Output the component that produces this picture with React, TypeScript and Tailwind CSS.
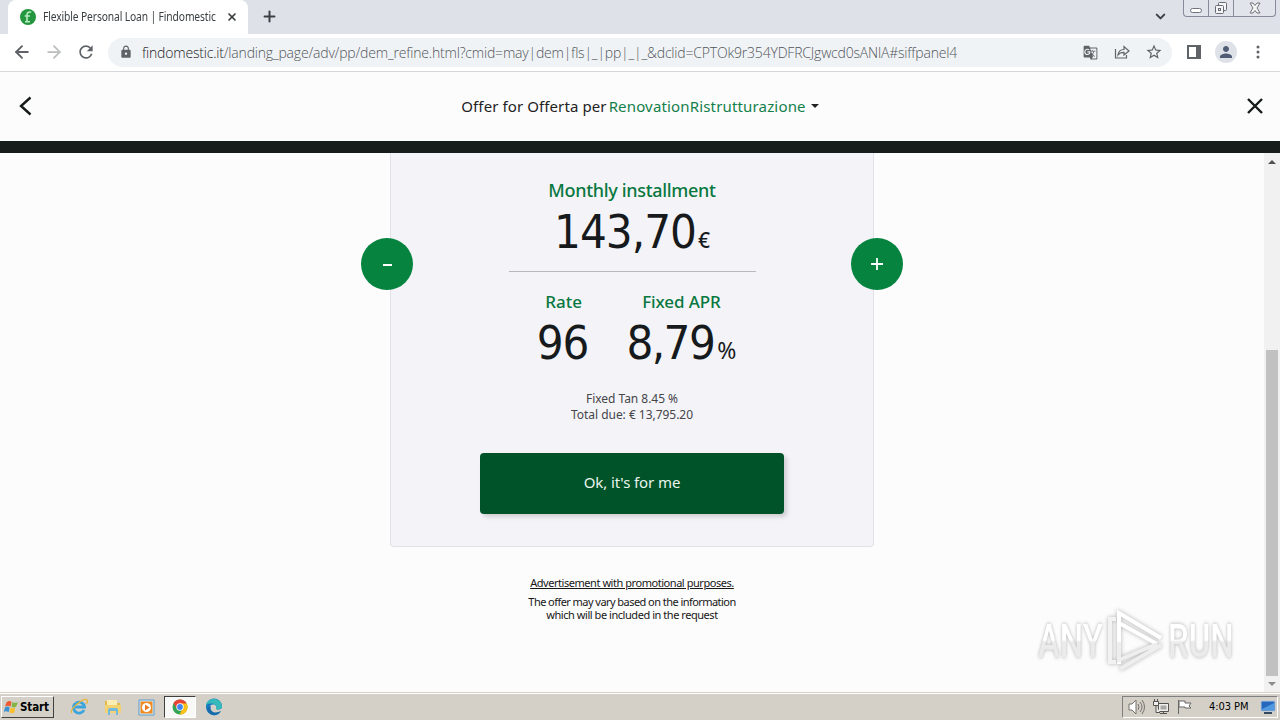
import { ArrowLeft, ArrowRight, ChevronDown, Plus, X } from 'lucide-react';
import { MdLock, MdRefresh, MdStarBorder, MdGTranslate, MdPerson } from 'react-icons/md';

function TabBar() {
  return (
    <div className="flex h-[34px] bg-[#dee1e8] pl-2 font-['Noto_Sans',sans-serif]">
      <div className="flex w-[240px] items-center rounded-t-lg bg-white pl-3 pr-[10px]">
        <svg className="h-4 w-4 shrink-0" viewBox="0 0 16 16">
          <circle cx="8" cy="8" r="8" fill="#23963f" />
          <path d="M11.2 3.3C8.5 2.6 7 3.6 7 5.8v6.4M4.7 7h5.2M5 12.7h5" fill="none" stroke="#b8edc0" strokeWidth="1.6" />
        </svg>
        <span className="ml-[7px] w-[173px]">
          <span className="block origin-left scale-x-[0.856] whitespace-nowrap text-[12px] leading-4 tracking-[-0.14px] text-[#3c4043]">
            Flexible Personal Loan | Findomestic
          </span>
        </span>
        <X className="ml-auto h-3 w-3 shrink-0 text-[#3c4043]" strokeWidth={3.4} />
      </div>
      <Plus className="ml-[13px] mt-[8px] h-[17px] w-[17px] text-[#3c4043]" strokeWidth={2.8} />
      <div className="ml-auto flex">
        <ChevronDown className="mr-[15px] mt-[9px] h-[15px] w-[15px] text-[#3c4043]" strokeWidth={3.2} />
        <div className="mr-1 flex h-[17px] w-[93px] rounded-b border border-t-0 border-[#858b99] bg-[#e1e4ea]">
          <div className="flex w-[25px] items-end justify-center border-r border-[#858b99] pb-[3px]">
            <div className="h-[5px] w-3 rounded-sm border border-[#70737a] bg-white" />
          </div>
          <div className="flex w-[25px] justify-center border-r border-[#858b99]">
            <svg className="mt-[1px] h-[14px] w-[14px]" viewBox="0 0 14 14" fill="#f4f4f6" stroke="#666b75">
              <rect x="4.5" y="1.5" width="8" height="8" rx="1" />
              <rect x="1.5" y="4.5" width="8" height="8" rx="1" />
              <rect x="4.5" y="7.5" width="2" height="2" />
            </svg>
          </div>
          <div className="flex flex-1 justify-center">
            <svg className="mt-[2px] h-3 w-3" viewBox="0 0 12 12" fill="#f7f7f8" stroke="#70737a">
              <path d="M1 1h3l2 2.5L8 1h3L8 6l3 5H8L6 8.5 4 11H1l3-5z" />
            </svg>
          </div>
        </div>
      </div>
    </div>
  );
}

function Toolbar() {
  return (
    <div className="flex h-[38px] items-center border-b border-[#d5d7da] bg-white pb-[1px] text-[#5f6368]">
      <ArrowLeft className="ml-3 h-5 w-5" strokeWidth={2.3} />
      <ArrowRight className="ml-3 h-5 w-5 text-[#babcbe]" strokeWidth={2.1} />
      <MdRefresh className="ml-[12px] h-5 w-5" />
      <div className="ml-[12px] flex h-[29px] w-[1064px] items-center rounded-full bg-[#f0f3f6] pl-[11px] pr-[9px]">
        <MdLock className="h-[14px] w-[14px]" />
        <span className="ml-[9px] whitespace-nowrap pt-[1px] font-['Open_Sans','Noto_Sans',sans-serif] text-[14px] font-light leading-5 tracking-[-0.19px] text-[#50555a]">
          <span className="text-[#202124]">findomestic.it</span>
          /landing_page/adv/pp/dem_refine.html?cmid=may|dem|fls|_|pp|_|_&amp;dclid=CPTOk9r354YDFRCJgwcd0sANlA#siffpanel4
        </span>
        <MdGTranslate className="ml-auto h-[15px] w-[15px]" />
        <svg className="ml-[16px] h-4 w-4" viewBox="0 0 16 16" fill="none" stroke="currentColor" strokeWidth="1.2">
          <path d="M1.500 5v9h11v-3M4 11c.5-4 2.500-5.500 6-5.500V2.500l5 4.500-5 4V8.300C7.300 8.200 5.500 9 4 11z" />
        </svg>
        <MdStarBorder className="ml-[15px] h-[18px] w-[18px]" />
      </div>
      <svg className="ml-[14px] h-4 w-4" viewBox="0 0 16 16">
        <path d="M2 2h12v12H2z" fill="none" stroke="currentColor" strokeWidth="2" />
        <path d="M10 2h4v12h-4z" fill="currentColor" />
      </svg>
      <div className="ml-[13px] flex h-[22px] w-[22px] items-center justify-center rounded-full bg-[#dee1e7]">
        <MdPerson className="h-[18px] w-[18px] text-[#505b75]" />
      </div>
      <svg className="ml-[13px] h-4 w-4" viewBox="0 0 16 16" fill="currentColor">
        <circle cx="8" cy="3" r="1.500" />
        <circle cx="8" cy="8" r="1.500" />
        <circle cx="8" cy="13" r="1.500" />
      </svg>
    </div>
  );
}

function OfferHeader() {
  return (
    <header className="flex h-[81px] items-center justify-between border-b-[12px] border-[#171d1b] bg-[#fcfcfc] px-4 pb-[1px]">
      <svg className="h-5 w-5" viewBox="0 0 20 20" fill="none" stroke="#161a19" strokeWidth="2.400">
        <path d="M14.500 1.500 5 10l9.500 8.500" />
      </svg>
      <div className="flex items-center whitespace-nowrap pr-[2px] text-[15px] leading-5 tracking-[0.1px] text-[#222]">
        <span>Offer for Offerta per</span>
        <span className="ml-[2px] tracking-[0.16px] text-[#13804b]">RenovationRistrutturazione</span>
        <span className="ml-[5px] border-x-4 border-t-4 border-x-transparent border-t-[#222]" />
      </div>
      <svg className="h-[18px] w-[18px]" viewBox="0 0 18 18" fill="none" stroke="#161a19" strokeWidth="2.400">
        <path d="m2 2 14 14M16 2 2 16" />
      </svg>
    </header>
  );
}

const figure = "font-['DejaVu_Sans_Condensed','DejaVu_Sans',sans-serif] text-[47px] leading-[48px] text-[#171a1c]";
const roundButton =
  'absolute top-[85px] flex h-[52px] w-[52px] items-center justify-center rounded-full bg-[#06833f] text-white';

function LoanCard() {
  return (
    <section className="relative flex h-[394px] w-[484px] flex-col items-center rounded-b border border-t-0 border-[#e1e1e6] bg-[#f4f4f8]">
      <button className={`${roundButton} -left-[30px]`}>
        <span className="mt-[2px] h-[2px] w-[9px] bg-white" />
      </button>
      <button className={`${roundButton} -right-[30px]`}>
        <svg className="h-[14px] w-[14px]" viewBox="0 0 14 14" stroke="currentColor" strokeWidth="1.800">
          <path d="M1 7h12M7 1v12" />
        </svg>
      </button>

      <h2 className="mt-[25px] text-[18px] font-medium leading-6 tracking-[-0.32px] text-[#08783f]">Monthly installment</h2>
      <div className="mt-[6px] flex h-12 items-baseline">
        <span className={`${figure} tracking-[-1px]`}>143,70</span>
        <span className="ml-[2px] text-[21px] font-medium leading-6 text-[#171a1c]">€</span>
      </div>
      <div className="mt-[15px] w-[247px] border-t border-[#b8b8bc]" />

      <div className="mt-[18px] flex gap-[38px] pl-[9px]">
        <div className="flex flex-col items-center">
          <h3 className="pl-[2px] text-[17px] font-medium leading-6 text-[#08783f]">Rate</h3>
          <div className={`${figure} mt-[5px] tracking-[-1px]`}>96</div>
        </div>
        <div className="flex flex-col items-center">
          <h3 className="text-[17px] font-medium leading-6 tracking-[-0.1px] text-[#08783f]">Fixed APR</h3>
          <div className="mt-[5px] flex h-12 items-baseline">
            <span className={`${figure} tracking-[-1.600px]`}>8,79</span>
            <span className="ml-[3px] text-[23px] leading-6 text-[#171a1c]">%</span>
          </div>
        </div>
      </div>

      <p className="mt-[24px] text-center text-[12px] leading-4 tracking-[-0.03px] text-[#45454a]">
        Fixed Tan 8.45 %
        <br />
        Total due: € 13,795.20
      </p>
      <button className="mt-[30px] h-[61px] w-[304px] rounded bg-[#005328] pb-[2px] text-[15px] tracking-[-0.1px] text-[#e9f5ed] shadow-[3px_3px_4px_#00000026]">
        Ok, it&apos;s for me
      </button>
    </section>
  );
}

function Scrollbar() {
  return (
    <div className="flex w-4 flex-col items-center bg-[#f1f1f1]">
      <div className="mt-[7px] border-x-4 border-b-4 border-x-transparent border-b-[#505050]" />
      <div className="mt-[186px] h-[326px] w-3 bg-[#c1c1c1]" />
      <div className="mt-[6px] border-x-4 border-t-4 border-x-transparent border-t-[#8a8a8a]" />
    </div>
  );
}

function Watermark() {
  const word =
    "inline-block h-[50px] origin-left scale-x-[0.700] bg-gradient-to-b from-white from-48% to-[#ebebeb] to-52% bg-clip-text font-['Roboto',sans-serif] text-[47px] font-medium leading-[50px] text-transparent drop-shadow-[0_0_2px_#b0b0b0]";
  return (
    <div className="absolute left-[1038px] top-[608px] flex h-[66px] w-[200px] items-center">
      <span className="w-[66px]">
        <span className={word}>ANY</span>
      </span>
      <svg className="h-[66px] w-[62px] shrink-0 drop-shadow-[0_0_2px_#b0b0b0]" viewBox="0 0 62 66" fill="none" strokeWidth="4">
        <path d="M12 11H6v43h6" stroke="#f2f2f2" />
        <path d="M15 56V5l42 25M15 15l38 21" stroke="#fff" />
        <path d="M15 34v18l38-16M16 61l41-24" stroke="#eeeeee" />
      </svg>
      <span className="ml-[2px] w-[66px]">
        <span className={word}>RUN</span>
      </span>
    </div>
  );
}

function TaskbarIcons() {
  return (
    <>
      <svg className="ml-[16px] h-[18px] w-[18px]" viewBox="0 0 18 18" fill="none">
        <path d="M14 12a5.500 5.500 0 1 1 .5-3H4" stroke="#3ba4dd" strokeWidth="2.800" />
        <path d="M2 15C-2 12 14-1 17 2c1 1 0 3-1 4" stroke="#e5b637" strokeWidth="1.200" />
      </svg>
      <svg className="ml-[16px] h-[18px] w-[18px]" viewBox="0 0 18 18">
        <path d="M1 3h6l1 2h8v10H1z" fill="#e3b94d" />
        <path d="M3 2h10v5H3z" fill="#f9edb3" />
        <path d="M1 7h16v8H1z" fill="#f3d272" />
        <path d="M4 17v-5q0-2 2-2h6q2 0 2 2v5h-2v-4H6v4z" fill="#72b9dc" />
      </svg>
      <svg className="ml-[16px] h-[17px] w-[17px]" viewBox="0 0 17 17">
        <path d="M1 1h15v15H1z" fill="#d8edfa" stroke="#5c9bc9" />
        <path d="M2.500 2.500h12v12h-12z" fill="#ef8b21" />
        <circle cx="8.500" cy="8.500" r="4.500" fill="white" />
        <path d="m7 5.500 4.500 3L7 11.500z" fill="#e9781b" />
      </svg>
      <div className="ml-[9px] flex h-[22px] w-[32px] items-center justify-center border border-b-white border-l-[#404040] border-r-white border-t-[#404040] bg-[#f8f8f7]">
        <svg className="h-4 w-4" viewBox="0 0 16 16">
          <circle cx="8" cy="8" r="7.500" fill="#34a353" />
          <path d="M1.500 4.200A7.500 7.500 0 0 1 14.500 4.200L8 8 5 10z" fill="#e84335" />
          <path d="M14.700 4.500A7.500 7.500 0 0 1 7.500 15.500L11 9 8 4.500z" fill="#fbc116" />
          <circle cx="8" cy="8" r="3.700" fill="white" />
          <circle cx="8" cy="8" r="2.900" fill="#4285f4" />
        </svg>
      </div>
      <svg className="ml-[9px] h-[18px] w-[18px]" viewBox="0 0 18 18">
        <path d="M1 9a8 8 0 0 1 16-1c0 4-3 4-6 3 2-4-3-6-6-3-2 4 1 8 6 9-6 1-10-4-10-8z" fill="#1679bf" />
        <path d="M1 7c2-8 15-8 16 1 0 4-4 4-6 3 2-5-5-7-10-4z" fill="#35b9ba" />
        <path d="M6 8c-2 6 4 8 10 5-3 6-10 5-13 1-2-3 0-5 3-6z" fill="#176dab" />
      </svg>
    </>
  );
}

function Taskbar() {
  return (
    <footer className="flex h-7 items-center border-t border-[#d4d0c8] bg-[#d4d0c8] pt-[1px] font-['DejaVu_Sans_Condensed','DejaVu_Sans',sans-serif] text-black shadow-[inset_0_1px_0_#fff]">
      <button className="ml-[1px] flex h-[22px] w-[53px] items-center border border-b-[#404040] border-l-white border-r-[#404040] border-t-white pl-[2px] text-[11.500px] font-bold leading-4 tracking-[-0.1px]">
        <svg className="mr-[1px] h-[15px] w-[15px] shrink-0" viewBox="0 0 16 16">
          <path d="M3 2q3-2 5 0L7 7Q4 5 1 7z" fill="#ed5930" />
          <path d="M9 2q3 2 6 0l-2 5q-3 2-5 0z" fill="#83b543" />
          <path d="M1 8q3-2 5 0l-1 5q-3-2-5 0z" fill="#3b91d1" />
          <path d="M7 8q3 2 5 0l-1 5q-3 2-5 0z" fill="#f9bd25" />
        </svg>
        Start
      </button>
      <TaskbarIcons />
      <div className="ml-auto mr-[2px] flex h-[22px] w-[156px] items-center border border-b-white border-l-[#808080] border-r-white border-t-[#808080] pl-[5px]">
        <svg className="h-[18px] w-[18px]" viewBox="0 0 18 18" fill="#fff" stroke="#74716b">
          <path d="M1 6h3l4-4v14l-4-4H1z" />
          <path d="M10 6q2 3 0 6M12 4q4 5 0 10M14 2q5 7 0 14" fill="none" />
        </svg>
        <svg className="ml-[7px] h-4 w-4" viewBox="0 0 16 16" fill="#eee" stroke="#55534f">
          <path d="M5.500 4.500h10v8h-10zM7 14.500h7M10.500 12.500v2" />
          <path d="M7.500 6.500h6v4h-6z" fill="#a9a7a3" stroke="none" />
          <path d="M.5 2.500h5v4h-5zM3 6.500v7h4M1.500 0v2M4.500 0v2" />
        </svg>
        <svg className="ml-[8px] h-4 w-4" viewBox="0 0 16 16" fill="#fff" stroke="#666">
          <path d="M1.500 1v14M2 2h6v2h6l-2 3 2 2H8V8H2z" />
        </svg>
        <span className="ml-4 whitespace-nowrap text-[11px] leading-4 tracking-[-0.05px]">4:03 PM</span>
        <svg className="ml-auto mr-[1px] h-[15px] w-4 shrink-0" viewBox="0 0 16 15">
          <path d="M1 1h14v10H1z" fill="#2467bd" stroke="#b3c7de" />
          <path d="M2 9 14 3v7H2z" fill="#4f99df" />
          <path d="M4 13h8" stroke="#334962" strokeWidth="2" />
        </svg>
      </div>
    </footer>
  );
}

export default function App() {
  return (
    <div className="relative flex h-[720px] w-[1280px] flex-col overflow-hidden bg-[#fcfcfc] font-['Noto_Sans',sans-serif]">
      <TabBar />
      <Toolbar />
      <OfferHeader />
      <div className="flex h-[539px]">
        <main className="flex flex-1 flex-col items-center">
          <LoanCard />
          <p className="mt-[28px] text-[11px] leading-4 tracking-[-0.45px] text-[#171717] underline">
            Advertisement with promotional purposes.
          </p>
          <p className="mt-[4px] text-center text-[11px] leading-[13px] tracking-[-0.55px] text-[#171717]">
            The offer may vary based on the information
            <br />
            <span className="tracking-[-0.45px]">which will be included in the request</span>
          </p>
        </main>
        <Scrollbar />
      </div>
      <Taskbar />
      <Watermark />
    </div>
  );
}
